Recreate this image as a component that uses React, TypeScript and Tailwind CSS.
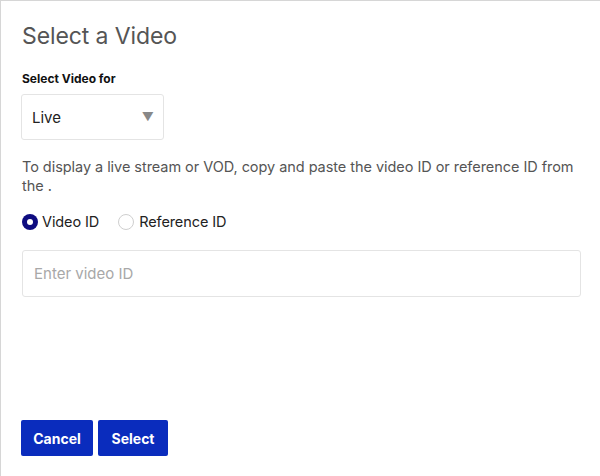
import React, { useState } from "react";

export default function App() {
  const [mode, setMode] = useState<"video" | "reference">("video");

  return (
    <div
      className="h-[476px] w-[600px] overflow-hidden border-l border-t border-[#d6d6d6] bg-white"
      style={{ fontFamily: "Inter, 'Noto Sans', sans-serif" }}
    >
      <div className="flex h-full flex-col px-[20px]">
        <h1 className="mt-[20px] ml-px text-[23px] leading-[30px] tracking-[-0.1px] text-[#555555]">
          Select a Video
        </h1>

        <label className="mt-[20px] ml-px text-[12px] leading-[16px] font-bold text-[#111111]">
          Select Video for
        </label>

        <div className="relative mt-[7px] h-[46px] w-[143px] rounded-[3px] border border-[#e4e4e4]">
          <span className="absolute left-[10px] top-[14px] text-[15px] leading-[18px] text-[#222222]">
            Live
          </span>
          <span className="absolute right-[9px] top-[14px] text-[12px] leading-[16px] text-[#888888]">
            ▼
          </span>
        </div>

        <p className="mt-[17px] ml-px w-[560px] text-[14.5px] leading-[19px] tracking-[-0.05px] text-[#555555]">
          To display a live stream or VOD, copy and paste the video ID or reference ID from the .
        </p>

        <div className="mt-[18px] ml-px flex items-center text-[14.5px] leading-[18px] tracking-[-0.1px] text-[#222222]">
          <button
            onClick={() => setMode("video")}
            className="flex items-center gap-[4px]"
          >
            {mode === "video" ? (
              <span className="flex h-[16px] w-[16px] items-center justify-center rounded-full bg-[#0e0c80]">
                <span className="h-[6px] w-[6px] rounded-full bg-white" />
              </span>
            ) : (
              <span className="h-[16px] w-[16px] rounded-full border border-[#cfcfcf]" />
            )}
            Video ID
          </button>
          <button
            onClick={() => setMode("reference")}
            className="ml-[19px] flex items-center gap-[5px]"
          >
            {mode === "reference" ? (
              <span className="flex h-[16px] w-[16px] items-center justify-center rounded-full bg-[#0e0c80]">
                <span className="h-[6px] w-[6px] rounded-full bg-white" />
              </span>
            ) : (
              <span className="h-[16px] w-[16px] rounded-full border border-[#cfcfcf]" />
            )}
            Reference ID
          </button>
        </div>

        <input
          placeholder="Enter video ID"
          className="mt-[19px] ml-px h-[47px] w-[559px] rounded-[3px] border border-[#e4e4e4] px-[11px] text-[15px] text-[#222222] outline-none placeholder:text-[#a8a8a8]"
        />

        <div className="mt-auto mb-[20px] flex gap-[5px]">
          <button className="h-[36px] w-[72px] rounded-[2px] bg-[#0a2cbd] text-[14px] font-bold text-white">
            Cancel
          </button>
          <button className="h-[36px] w-[70px] rounded-[2px] bg-[#0a2cbd] text-[14px] font-bold text-white">
            Select
          </button>
        </div>
      </div>
    </div>
  );
}
